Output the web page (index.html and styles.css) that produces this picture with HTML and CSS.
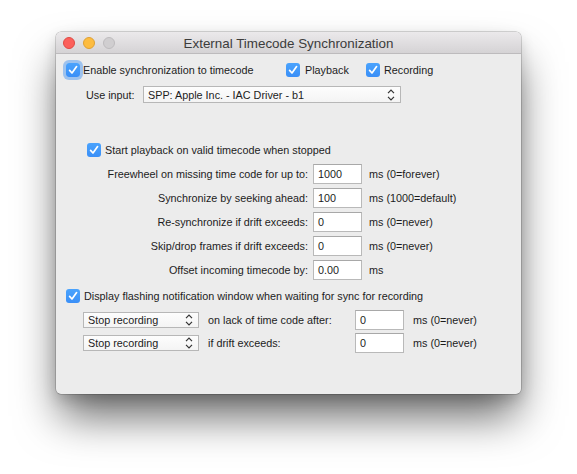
FILE: index.html
```html
<!DOCTYPE html>
<html>
<head>
<meta charset="utf-8">
<link rel="stylesheet" href="styles.css">
</head>
<body>
<div class="window">
  <div class="titlebar">
    <div class="lights">
      <span class="light red"></span>
      <span class="light yellow"></span>
      <span class="light grey"></span>
    </div>
    <div class="title">External Timecode Synchronization</div>
    <div></div>
  </div>
  <div class="content">
    <div class="row r1">
      <label class="check c-enable"><span class="box focus"><svg viewBox="0 0 14 14" width="14" height="14"><path d="M3.6 7.4 L6 10 L10.6 3.6" fill="none" stroke="#fff" stroke-width="1.7" stroke-linecap="round" stroke-linejoin="round"/></svg></span><span>Enable synchronization to timecode</span></label>
      <label class="check c-play"><span class="box"><svg viewBox="0 0 14 14" width="14" height="14"><path d="M3.6 7.4 L6 10 L10.6 3.6" fill="none" stroke="#fff" stroke-width="1.7" stroke-linecap="round" stroke-linejoin="round"/></svg></span><span>Playback</span></label>
      <label class="check"><span class="box"><svg viewBox="0 0 14 14" width="14" height="14"><path d="M3.6 7.4 L6 10 L10.6 3.6" fill="none" stroke="#fff" stroke-width="1.7" stroke-linecap="round" stroke-linejoin="round"/></svg></span><span>Recording</span></label>
    </div>
    <div class="row r2">
      <span class="use-label">Use input:</span>
      <div class="select input-select"><span>SPP: Apple Inc. - IAC Driver - b1</span><svg class="chev" viewBox="0 0 8 12" width="8" height="12"><path d="M1 4.2 L4 1.2 L7 4.2 M1 7.8 L4 10.8 L7 7.8" fill="none" stroke="#333" stroke-width="1.2"/></svg></div>
    </div>
    <div class="row r3">
      <label class="check"><span class="box"><svg viewBox="0 0 14 14" width="14" height="14"><path d="M3.6 7.4 L6 10 L10.6 3.6" fill="none" stroke="#fff" stroke-width="1.7" stroke-linecap="round" stroke-linejoin="round"/></svg></span><span>Start playback on valid timecode when stopped</span></label>
    </div>
    <div class="fields">
      <span class="flabel">Freewheel on missing time code for up to:</span><div class="field">1000</div><span class="unit">ms (0=forever)</span>
      <span class="flabel">Synchronize by seeking ahead:</span><div class="field">100</div><span class="unit">ms (1000=default)</span>
      <span class="flabel">Re-synchronize if drift exceeds:</span><div class="field">0</div><span class="unit">ms (0=never)</span>
      <span class="flabel">Skip/drop frames if drift exceeds:</span><div class="field">0</div><span class="unit">ms (0=never)</span>
      <span class="flabel">Offset incoming timecode by:</span><div class="field">0.00</div><span class="unit">ms</span>
    </div>
    <div class="row r4">
      <label class="check"><span class="box"><svg viewBox="0 0 14 14" width="14" height="14"><path d="M3.6 7.4 L6 10 L10.6 3.6" fill="none" stroke="#fff" stroke-width="1.7" stroke-linecap="round" stroke-linejoin="round"/></svg></span><span>Display flashing notification window when waiting for sync for recording</span></label>
    </div>
    <div class="subfields">
      <div class="select popup"><span>Stop recording</span><svg class="chev" viewBox="0 0 8 12" width="8" height="12"><path d="M1 4.2 L4 1.2 L7 4.2 M1 7.8 L4 10.8 L7 7.8" fill="none" stroke="#333" stroke-width="1.2"/></svg></div>
      <span class="sublabel">on lack of time code after:</span>
      <div class="field">0</div>
      <span class="unit">ms (0=never)</span>
      <div class="select popup"><span>Stop recording</span><svg class="chev" viewBox="0 0 8 12" width="8" height="12"><path d="M1 4.2 L4 1.2 L7 4.2 M1 7.8 L4 10.8 L7 7.8" fill="none" stroke="#333" stroke-width="1.2"/></svg></div>
      <span class="sublabel">if drift exceeds:</span>
      <div class="field">0</div>
      <span class="unit">ms (0=never)</span>
    </div>
  </div>
</div>
</body>
</html>
```

FILE: styles.css
```css
* { box-sizing: border-box; }
html, body { margin: 0; background: #fff; }
body {
  min-height: 474px;
  padding: 32px 0 0 56px;
  font-family: "Liberation Sans", Arial, sans-serif;
  font-size: 10.8px;
  color: #1c1c1c;
}
.window {
  width: 465px;
  height: 362px;
  background: #ececec;
  border-radius: 5px;
  box-shadow: 0 0 0 0.5px rgba(0,0,0,0.3), 0 26px 44px -4px rgba(0,0,0,0.6), 0 6px 14px rgba(0,0,0,0.15);
  overflow: hidden;
}
.titlebar {
  height: 22px;
  display: grid;
  grid-template-columns: 1fr auto 1fr;
  align-items: center;
  background: linear-gradient(#ebe9eb, #d5d3d5);
  border-bottom: 1px solid #bdbbbd;
}
.lights { display: flex; gap: 8px; padding-left: 7px; padding-top: 1px; }
.light { width: 12px; height: 12px; border-radius: 50%; display: block; }
.red { background: #fc605b; border: 0.5px solid #de4a44; }
.yellow { background: #fdbc40; border: 0.5px solid #dea034; }
.grey { background: #d0ced0; border: 0.5px solid #bdbbbd; }
.title {
  font-size: 13.4px;
  color: #3c3c3c;
  padding-top: 1px;
}
.content { padding: 8px 0 0 10px; }
.row { display: flex; align-items: center; height: 16px; }
.check { display: flex; align-items: center; gap: 3px; white-space: nowrap; }
.box {
  width: 14px; height: 14px; border-radius: 3px;
  background: linear-gradient(#4aa3fd, #3a8ff7);
  display: block; flex: none;
}
.box svg { display: block; }
.box.focus { box-shadow: 0 0 0 3px rgba(92,160,240,0.55); }
.c-enable { width: 220px; }
.c-play { width: 80px; gap: 5px; }
.c-play + .check { gap: 4px; }
.r2 { margin-top: 8px; height: 17px; padding-left: 20px; }
.use-label { width: 57px; }
.select {
  height: 17px;
  border: 1px solid #b7b7b7;
  background: linear-gradient(#fdfdfd, #f4f4f4);
  display: flex; align-items: center; justify-content: space-between;
  padding: 0 5px 0 4px;
  color: #1c1c1c;
}
.chev { display: block; }
.input-select { width: 258px; }
.r3 { margin-top: 39px; padding-left: 21px; }
.r3 .check { gap: 4px; }
.fields {
  margin-top: 4px;
  display: grid;
  grid-template-columns: 242px 49px auto;
  grid-auto-rows: 24px;
  align-items: center;
  column-gap: 5px;
}
.fields .unit { margin-left: 2px; }
.flabel { text-align: right; white-space: nowrap; }
.field {
  height: 20px;
  width: 49px;
  background: #fff;
  border: 1px solid #b9b9b9;
  border-top-color: #a8a8a8;
  padding: 0 0 0 4px;
  display: flex; align-items: center;
}
.unit { white-space: nowrap; }
.r4 { margin-top: 6px; }
.r4 .check { gap: 4px; }
.subfields {
  margin-top: 4px;
  padding-left: 17px;
  display: grid;
  grid-template-columns: 116px 156px 49px auto;
  grid-template-rows: 23px 23px;
  align-items: center;
}
.popup { width: 116px; height: 16px; }
.sublabel { padding-left: 9px; }
.subfields .unit { padding-left: 9px; }
```
